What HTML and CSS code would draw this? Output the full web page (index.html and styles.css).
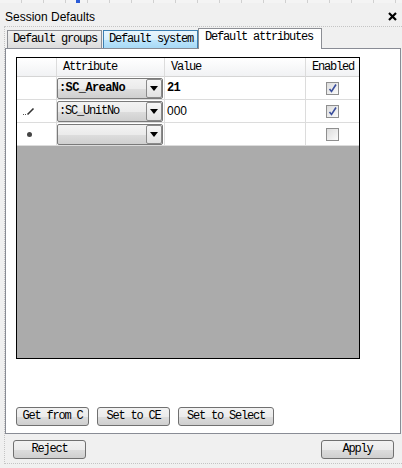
FILE: index.html
```html
<!DOCTYPE html>
<html>
<head>
<meta charset="utf-8">
<link rel="stylesheet" href="styles.css">
</head>
<body>
<div class="ruler"><span class="ruler-mark"></span></div>
<div class="titlebar">
  <span class="title">Session Defaults</span>
  <svg class="close" width="9" height="9" viewBox="0 0 9 9"><path d="M1 1L8 8M8 1L1 8" stroke="#000" stroke-width="2.2"/></svg>
</div>
<div class="dialog">
  <div class="tabs">
    <div class="tab">Default groups</div>
    <div class="tab tab-hover">Default system</div>
    <div class="tab tab-active">Default attributes</div>
  </div>
  <div class="panel">
    <div class="grid">
      <div class="cell head rowhead"></div>
      <div class="cell head">Attribute</div>
      <div class="cell head">Value</div>
      <div class="cell head last">Enabled</div>

      <div class="cell rowhead"></div>
      <div class="cell combo-cell"><div class="combo"><span class="combo-text bold">:SC_AreaNo</span><span class="combo-btn"><span class="arrow"></span></span></div></div>
      <div class="cell value bold">21</div>
      <div class="cell check-cell last"><span class="check checked"><svg width="11" height="11" viewBox="0 0 11 11"><path d="M2.5 6L4.5 8.5L9 1.5" fill="none" stroke="#3a4e9c" stroke-width="1.6"/></svg></span></div>

      <div class="cell rowhead"><svg width="14" height="10" viewBox="0 0 14 10"><rect x="1" y="8" width="1" height="1" fill="#555"/><rect x="3" y="8" width="1" height="1" fill="#555"/><path d="M5.5 8.5L11.5 2.5" stroke="#333" stroke-width="1.6"/></svg></div>
      <div class="cell combo-cell"><div class="combo"><span class="combo-text">:SC_UnitNo</span><span class="combo-btn"><span class="arrow"></span></span></div></div>
      <div class="cell value sans">000</div>
      <div class="cell check-cell last"><span class="check checked"><svg width="11" height="11" viewBox="0 0 11 11"><path d="M2.5 6L4.5 8.5L9 1.5" fill="none" stroke="#3a4e9c" stroke-width="1.6"/></svg></span></div>

      <div class="cell rowhead"><span class="star"></span></div>
      <div class="cell combo-cell"><div class="combo"><span class="combo-text"></span><span class="combo-btn"><span class="arrow"></span></span></div></div>
      <div class="cell value"></div>
      <div class="cell check-cell last"><span class="check"></span></div>

      <div class="fill"></div>
    </div>
    <div class="actions">
      <button class="btn w73">Get from C</button>
      <button class="btn w73">Set to CE</button>
      <button class="btn w96">Set to Select</button>
    </div>
  </div>
  <div class="footer">
    <button class="btn w73">Reject</button>
    <button class="btn w73">Apply</button>
  </div>
</div>
</body>
</html>
```
FILE: styles.css
```css
* { box-sizing: border-box; }
html, body { margin: 0; padding: 0; }
body {
  width: 402px;
  height: 468px;
  background: #f0f0f0;
  font-family: "Liberation Mono", "Courier New", monospace;
  font-size: 12px;
  letter-spacing: -1.2px;
  color: #000;
  overflow: hidden;
}
.ruler {
  height: 3px;
  background: repeating-linear-gradient(90deg, #f4f4f4 0 21px, #d0d0d0 21px 22px);
  position: relative;
}
.ruler-mark {
  position: absolute;
  left: 76px; top: 0;
  width: 4px; height: 3px;
  background: #2a5bd7;
}
.titlebar {
  height: 23px;
  display: flex;
  align-items: flex-end;
  justify-content: space-between;
  padding: 0 5px 2px 5px;
}
.title {
  font-family: "Liberation Sans", Arial, sans-serif;
  font-size: 12px;
  letter-spacing: 0;
  color: #000;
  line-height: 14px;
}
.close { margin-bottom: 3px; }
.dialog {
  margin-left: 4px;
  border-top: 1px dotted #c4c4c4;
  border-left: 1px dotted #c4c4c4;
  border-bottom: 1px dotted #c4c4c4;
  height: 438px;
  display: flex;
  flex-direction: column;
}
.tabs {
  display: flex;
  align-items: flex-end;
  padding-left: 2px;
  height: 22px;
  margin-bottom: -1px;
  position: relative;
  z-index: 1;
}
.tab {
  height: 18px;
  line-height: 17px;
  padding: 0 5px;
  border: 1px solid #8c8e94;
  border-bottom: none;
  background: linear-gradient(#f2f2f2, #dcdcdc);
  white-space: nowrap;
  margin-bottom: 1px;
}
.tab + .tab { margin-left: 1px; }
.tab:first-child { width: 95px; }
.tab-hover {
  width: 95px;
  border-color: #3c7fb1;
  background: linear-gradient(#eaf6fd 0%, #d9f0fc 50%, #bee6fd 51%, #a7d9f5 100%);
}
.tab-active {
  height: 21px;
  width: 124px;
  margin-left: 0 !important;
  margin-bottom: 0;
  background: #fff;
  line-height: 17px;
  padding-left: 6px;
}
.panel {
  width: 396px;
  height: 386px;
  border: 1px solid #898c95;
  background: #fff;
  padding: 8px 0 0 10px;
  display: flex;
  flex-direction: column;
}
.grid {
  width: 344px;
  height: 302px;
  border: 1px solid #000;
  display: grid;
  grid-template-columns: 40px 108px 141px 53px;
  grid-template-rows: 19px 23px 23px 23px 1fr;
}
.cell {
  border-right: 1px solid #dcdcdc;
  border-bottom: 1px solid #dcdcdc;
  background: #fff;
  display: flex;
  align-items: center;
  white-space: nowrap;
}
.cell.last { border-right: none; }
.head {
  background: linear-gradient(#ffffff, #f1f2f4);
  padding-left: 6px;
  line-height: 18px;
  border-bottom-color: #d5d5d5;
}
.rowhead { padding-left: 5px; }
.combo-cell { padding: 0 1px 0 0; }
.combo {
  width: 106px;
  height: 21px;
  border: 1px solid #7a7a7a;
  border-radius: 2px;
  background: linear-gradient(#f3f3f3 0%, #ebebeb 50%, #dddddd 51%, #cfcfcf 100%);
  display: flex;
  align-items: center;
  justify-content: space-between;
}
.combo-text { padding-left: 1px; }
.combo-btn {
  width: 16px;
  height: 19px;
  border: 1px solid #8a8a8a;
  border-radius: 2px;
  background: linear-gradient(#f7f7f7, #e2e2e2);
  display: flex;
  align-items: center;
  justify-content: center;
}
.arrow {
  width: 0; height: 0;
  border-left: 4px solid transparent;
  border-right: 4px solid transparent;
  border-top: 5px solid #000;
}
.bold { font-weight: bold; letter-spacing: -0.6px; }
.value { padding-left: 2px; }
.sans {
  font-family: "Liberation Sans", Arial, sans-serif;
  font-size: 12px;
  letter-spacing: 0;
}
.check-cell { justify-content: center; }
.check {
  width: 13px; height: 13px;
  border: 1px solid #8f8f8f;
  background: linear-gradient(135deg, #dcdcdc, #fbfbfb);
  display: flex;
  align-items: center;
  justify-content: center;
}
.star {
  width: 5px; height: 5px;
  border-radius: 50%;
  background: #444;
  margin-left: 5px;
}
.fill {
  grid-column: 1 / -1;
  background: #ababab;
}
.actions {
  display: flex;
  gap: 8px;
  margin-top: 48px;
}
.btn {
  font-family: "Liberation Mono", "Courier New", monospace;
  font-size: 12px;
  letter-spacing: -1.2px;
  height: 19px;
  padding: 0;
  border: 1px solid #707070;
  border-radius: 3px;
  background: linear-gradient(#f2f2f2 0%, #ebebeb 50%, #dddddd 51%, #cfcfcf 100%);
  color: #000;
  line-height: 17px;
}
.w73 { width: 73px; }
.w96 { width: 96px; }
.footer {
  display: flex;
  justify-content: space-between;
  padding: 6px 8px 0 8px;
}
```
